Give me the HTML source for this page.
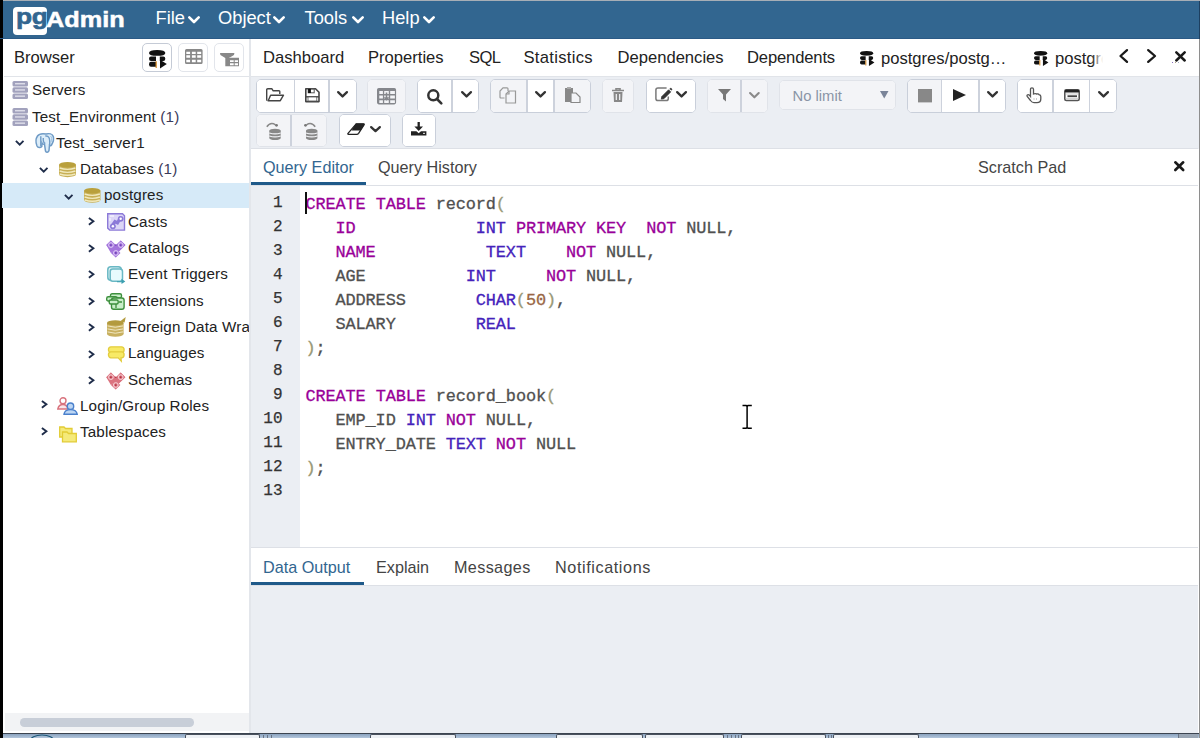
<!DOCTYPE html>
<html><head><meta charset="utf-8"><style>
*{box-sizing:border-box;margin:0;padding:0}
html,body{width:1200px;height:738px;overflow:hidden;background:#fff;font-family:"Liberation Sans",sans-serif;color:#222}
.a{position:absolute}
svg{position:absolute;overflow:visible}
.menu{color:#fff;font-size:18.3px;line-height:20px;white-space:nowrap}
.tab{font-size:16.6px;line-height:18px;color:#222;white-space:nowrap}
.tree{font-size:15.2px;line-height:16px;color:#222;white-space:nowrap;letter-spacing:0.15px}
.qtab{font-size:16.2px;line-height:18px;white-space:nowrap}
.btn{border:1px solid #c9cfda;border-radius:5px;background:#fff;overflow:hidden}
.dis{background:#f3f4f7;border-color:#e0e3e9}
.code{font-family:"Liberation Mono",monospace;font-size:16.9px;letter-spacing:-0.12px;-webkit-text-stroke:0.3px currentColor;white-space:pre;color:#505050;line-height:24px}
.ln{font-family:"Liberation Mono",monospace;font-size:16px;color:#333;-webkit-text-stroke:0.25px #333;text-align:right;width:32px;line-height:24px;white-space:pre}
.k{color:#990099}.t{color:#4422bb}.p{color:#999977}.n{color:#996644}
</style></head><body>
<div class="a" style="left:0px;top:0px;width:1200px;height:1.3px;background:#a7aeb6"></div>
<div class="a" style="left:0px;top:1px;width:1200px;height:38px;background:#326690"></div>
<div class="a" style="left:12.5px;top:6.5px;width:34.5px;height:28px;background:#fff;border-radius:4px"></div>
<div class="a " style="left:16px;top:3.8px;font:bold 22.5px/26px 'Liberation Sans';color:#326690;letter-spacing:-0.3px;-webkit-text-stroke:0.6px #326690;transform:scaleX(1.17);transform-origin:left">pg</div>
<div class="a " style="left:46px;top:7px;font:bold 22.6px/26px 'Liberation Sans';color:#fff;transform:scaleX(1.12);transform-origin:left;-webkit-text-stroke:0.5px #fff">Admin</div>
<div class="a menu" style="left:155.5px;top:7.5px;">File</div>
<svg style="left:188px;top:15.9px" width="12" height="7.3" viewBox="0 0 12 7.3"><polyline points="1.3,1.3 6.0,6.0 10.7,1.3" fill="none" stroke="#fff" stroke-width="2.6" stroke-linecap="round" stroke-linejoin="round"/></svg>
<div class="a menu" style="left:218px;top:7.5px;">Object</div>
<svg style="left:273.2px;top:15.9px" width="12" height="7.3" viewBox="0 0 12 7.3"><polyline points="1.3,1.3 6.0,6.0 10.7,1.3" fill="none" stroke="#fff" stroke-width="2.6" stroke-linecap="round" stroke-linejoin="round"/></svg>
<div class="a menu" style="left:304.5px;top:7.5px;">Tools</div>
<svg style="left:352.4px;top:15.9px" width="12" height="7.3" viewBox="0 0 12 7.3"><polyline points="1.3,1.3 6.0,6.0 10.7,1.3" fill="none" stroke="#fff" stroke-width="2.6" stroke-linecap="round" stroke-linejoin="round"/></svg>
<div class="a menu" style="left:382px;top:7.5px;">Help</div>
<svg style="left:423.2px;top:15.9px" width="12" height="7.3" viewBox="0 0 12 7.3"><polyline points="1.3,1.3 6.0,6.0 10.7,1.3" fill="none" stroke="#fff" stroke-width="2.6" stroke-linecap="round" stroke-linejoin="round"/></svg>
<div class="a" style="left:4px;top:75.5px;width:245px;height:1.5px;background:#e1e4e9"></div>
<div class="a tab" style="left:14px;top:49.3px;">Browser</div>
<div class="a btn" style="left:142px;top:43px;width:30px;height:29px;border:1.5px solid #c5cbd6"></div>
<div class="a btn" style="left:178px;top:43px;width:30px;height:29px;border-color:#e2e5eb"></div>
<div class="a btn" style="left:214px;top:43px;width:30px;height:29px;border-color:#e2e5eb"></div>
<div class="a" style="left:251px;top:75.5px;width:948px;height:1.5px;background:#e1e4e9"></div>
<div class="a tab" style="left:263px;top:49.2px;letter-spacing:0px">Dashboard</div>
<div class="a tab" style="left:368px;top:49.2px;letter-spacing:0px">Properties</div>
<div class="a tab" style="left:469px;top:49.2px;letter-spacing:-0.6px">SQL</div>
<div class="a tab" style="left:523.5px;top:49.2px;letter-spacing:0.3px">Statistics</div>
<div class="a tab" style="left:617.5px;top:49.2px;letter-spacing:0px">Dependencies</div>
<div class="a tab" style="left:747px;top:49.2px;letter-spacing:-0.15px">Dependents</div>
<div class="a tab" style="left:881px;top:49.5px;">postgres/postg…</div>
<div class="a tab" style="left:1055px;top:49.5px;width:49px;overflow:hidden">postgres</div>
<div class="a" style="left:1092px;top:44px;width:13px;height:28px;background:linear-gradient(to right,rgba(255,255,255,0),#fff 85%)"></div>
<div class="a" style="left:251px;top:77px;width:948px;height:72px;background:#ebeef3"></div>
<div class="a" style="left:250px;top:148px;width:948px;height:1px;background:#dde0e6"></div>
<div class="a qtab" style="left:263px;top:158px;color:#326690">Query Editor</div>
<div class="a" style="left:251px;top:182px;width:115px;height:2.5px;background:#1f5a8a"></div>
<div class="a qtab" style="left:378px;top:158px;color:#444">Query History</div>
<div class="a qtab" style="left:978px;top:158px;color:#444">Scratch Pad</div>
<div class="a" style="left:250px;top:185px;width:948px;height:1px;background:#dde0e6"></div>
<div class="a" style="left:250px;top:186px;width:50px;height:361px;background:#ebeef3"></div>
<div class="a" style="left:250px;top:547px;width:948px;height:1px;background:#dde0e6"></div>
<div class="a qtab" style="left:263px;top:558.3px;color:#326690">Data Output</div>
<div class="a" style="left:251px;top:582px;width:113px;height:2.5px;background:#1f5a8a"></div>
<div class="a qtab" style="left:376px;top:558.3px;color:#444">Explain</div>
<div class="a qtab" style="left:454px;top:558.3px;color:#444;letter-spacing:0.35px">Messages</div>
<div class="a qtab" style="left:555px;top:558.3px;color:#444;letter-spacing:0.6px">Notifications</div>
<div class="a" style="left:250px;top:585px;width:948px;height:1px;background:#dde0e6"></div>
<div class="a" style="left:250px;top:586px;width:948px;height:147px;background:#ebeef3"></div>
<div class="a" style="left:249px;top:39px;width:2px;height:694px;background:#e3e6eb"></div>
<div class="a" style="left:4.5px;top:713px;width:244.5px;height:17.5px;background:#f2f3f5"></div>
<div class="a" style="left:20px;top:718px;width:174px;height:8.6px;background:#c8ced8;border-radius:4.3px"></div>
<div class="a" style="left:0px;top:733px;width:1200px;height:1px;background:#3c4450"></div>
<div class="a" style="left:0px;top:734px;width:1200px;height:4px;background:linear-gradient(#8aa2be,#b3c6dc)"></div>
<div class="a" style="left:185px;top:734px;width:75px;height:4px;background:#eef1f5;border:1px solid #4a525e;border-bottom:none;border-radius:2px 2px 0 0"></div>
<div class="a" style="left:370px;top:734px;width:86px;height:4px;background:#eef1f5;border:1px solid #4a525e;border-bottom:none;border-radius:2px 2px 0 0"></div>
<div class="a" style="left:556px;top:734px;width:86.5px;height:4px;background:#eef1f5;border:1px solid #4a525e;border-bottom:none;border-radius:2px 2px 0 0"></div>
<div class="a" style="left:645px;top:734px;width:79px;height:4px;background:#eef1f5;border:1px solid #4a525e;border-bottom:none;border-radius:2px 2px 0 0"></div>
<div class="a" style="left:741px;top:734px;width:85px;height:4px;background:#eef1f5;border:1px solid #4a525e;border-bottom:none;border-radius:2px 2px 0 0"></div>
<div class="a" style="left:832.5px;top:734px;width:86.5px;height:4px;background:#eef1f5;border:1px solid #4a525e;border-bottom:none;border-radius:2px 2px 0 0"></div>
<div class="a" style="left:263px;top:734.5px;width:1px;height:3.5px;background:#6a7585"></div>
<div class="a" style="left:267px;top:734.5px;width:1px;height:3.5px;background:#6a7585"></div>
<div class="a" style="left:270.5px;top:734.5px;width:1px;height:3.5px;background:#6a7585"></div>
<div class="a" style="left:727px;top:734.5px;width:1px;height:3.5px;background:#6a7585"></div>
<div class="a" style="left:731px;top:734.5px;width:1px;height:3.5px;background:#6a7585"></div>
<div class="a" style="left:735px;top:734.5px;width:1px;height:3.5px;background:#6a7585"></div>
<div class="a" style="left:738px;top:734.5px;width:1px;height:3.5px;background:#6a7585"></div>
<div class="a" style="left:828px;top:734.5px;width:1px;height:3.5px;background:#6a7585"></div>
<div class="a" style="left:830.5px;top:734.5px;width:1px;height:3.5px;background:#6a7585"></div>
<div class="a" style="left:1178px;top:734px;width:20px;height:4px;background:#9aa6b4;border-left:1px solid #6a7585"></div>
<svg style="left:28px;top:733.5px" width="28" height="8" viewBox="0 0 28 8"><ellipse cx="14" cy="7" rx="12" ry="6" fill="none" stroke="#1e5a7a" stroke-width="1.2"/></svg>
<div class="a" style="left:0px;top:0px;width:2.5px;height:738px;background:#000"></div>
<div class="a" style="left:1198.6px;top:1px;width:1.4px;height:38px;background:#1d3f60"></div>
<div class="a" style="left:1198.6px;top:39px;width:1.4px;height:699px;background:#8e8e8e"></div>
<div class="a" style="left:0px;top:38px;width:1198.6px;height:1px;background:#2b5a86"></div>
<div class="a code" style="left:305.5px;top:192.5px"><span class="k">CREATE</span> <span class="k">TABLE</span> record<span class="p">(</span>
   <span class="k">ID</span>            <span class="t">INT</span> <span class="k">PRIMARY</span> <span class="k">KEY</span>  <span class="k">NOT</span> NULL,
   <span class="k">NAME</span>           <span class="t">TEXT</span>    <span class="k">NOT</span> NULL,
   AGE          <span class="t">INT</span>     <span class="k">NOT</span> NULL,
   ADDRESS       <span class="t">CHAR</span><span class="p">(</span><span class="n">50</span><span class="p">)</span>,
   SALARY        <span class="t">REAL</span>
<span class="p">)</span>;

<span class="k">CREATE</span> <span class="k">TABLE</span> record_book<span class="p">(</span>
   EMP_ID <span class="t">INT</span> <span class="k">NOT</span> NULL,
   ENTRY_DATE <span class="t">TEXT</span> <span class="k">NOT</span> NULL
<span class="p">)</span>;
</div>
<div class="a ln" style="left:250.5px;top:191.3px">1
2
3
4
5
6
7
8
9
10
11
12
13</div>
<div class="a" style="left:305px;top:192px;width:1.6px;height:22px;background:#111"></div>
<svg style="left:741.5px;top:404px" width="11" height="26" viewBox="0 0 11 26"><path d="M0.5 1.5 H4.2 L5.1 2.4 L6 1.5 H9.8 M5.1 2.4 V23.3 M0.5 24.2 H4.2 L5.1 23.3 L6 24.2 H9.8" fill="none" stroke="#000" stroke-width="1.5"/></svg>
<div class="a" style="left:2px;top:183px;width:247px;height:25px;background:#d6eaf8"></div>
<div class="a" style="left:2px;top:77px;width:247px;height:400px;overflow:hidden">
<svg style="left:10px;top:4.299999999999997px" width="16.5" height="18" viewBox="0 0 16.5 18"><g fill="#a2a2bd"><rect x="0.5" y="0" width="15.5" height="5.6" rx="1.5"/><rect x="0.5" y="6.2" width="15.5" height="5.6" rx="1.5"/><rect x="0.5" y="12.4" width="15.5" height="5.6" rx="1.5"/></g><g fill="#e4e4ee"><rect x="3" y="2.1" width="10" height="1.3"/><rect x="3" y="8.3" width="10" height="1.3"/><rect x="3" y="14.5" width="10" height="1.3"/></g></svg>
<div class="a tree" style="left:30px;top:5px">Servers</div>
<svg style="left:10px;top:31.400000000000006px" width="16.5" height="18" viewBox="0 0 16.5 18"><g fill="#a2a2bd"><rect x="0.5" y="0" width="15.5" height="5.6" rx="1.5"/><rect x="0.5" y="6.2" width="15.5" height="5.6" rx="1.5"/><rect x="0.5" y="12.4" width="15.5" height="5.6" rx="1.5"/></g><g fill="#e4e4ee"><rect x="3" y="2.1" width="10" height="1.3"/><rect x="3" y="8.3" width="10" height="1.3"/><rect x="3" y="14.5" width="10" height="1.3"/></g></svg>
<div class="a tree" style="left:30px;top:32px">Test_Environment <span style="color:#3a3a5a">(1)</span></div>
<svg style="left:13.4px;top:62.5px" width="9.4" height="6" viewBox="0 0 9.4 6"><polyline points="0.9,0.9 4.7,4.6 8.5,0.9" fill="none" stroke="#1f2d4a" stroke-width="1.9"/></svg>
<svg style="left:32.7px;top:56.400000000000006px" width="19" height="19.8" viewBox="0 0 19 19.8"><path d="M2.5 3 C4 0.8 8 0.5 11 1 C14 0.2 17.5 0.8 18.3 3.5 C19.2 6.5 18 9.5 16.5 12 C16 12.8 15.3 12.8 14.5 12.3 L14 17.5 C13.5 19.5 11 19.8 10.5 18 L9.5 11.2 C8.5 11.5 7.5 11 7 10 L6.8 13.5 C5.5 15 3 15 2 13 C0.8 10 0.8 5.5 2.5 3Z" fill="#dcedf9" stroke="#6f9bc6" stroke-width="1.5"/><path d="M5.8 3.2 V13.2 M8.3 5 C8 8 8.6 9.8 10.2 10.5 M10.3 3 C13.5 2.5 15.3 4.5 14.6 12" fill="none" stroke="#6f9bc6" stroke-width="1.4"/><path d="M15.5 3 C17 4 17 7 16 9" fill="none" stroke="#9dc0e0" stroke-width="1"/></svg>
<div class="a tree" style="left:54px;top:57.5px">Test_server1</div>
<svg style="left:37.3px;top:89.6px" width="9.4" height="6" viewBox="0 0 9.4 6"><polyline points="0.9,0.9 4.7,4.6 8.5,0.9" fill="none" stroke="#1f2d4a" stroke-width="1.9"/></svg>
<svg style="left:57.3px;top:85px" width="17" height="15.2" viewBox="0 0 17 15.2"><rect x="0" y="2.8" width="17" height="9.6" fill="#c7af55"/><ellipse cx="8.5" cy="12.399999999999999" rx="8.5" ry="2.8" fill="#c7af55"/><ellipse cx="8.5" cy="2.8" rx="8.5" ry="2.8" fill="#b9a03c"/>
<path d="M0.6 6 Q8.5 8.8 16.4 6 M0.6 9 Q8.5 11.8 16.4 9 M0.6 12 Q8.5 14.6 16.4 12" fill="none" stroke="#f1e9bd" stroke-width="1.4"/></svg>
<div class="a tree" style="left:78px;top:84px">Databases <span style="color:#3a3a5a">(1)</span></div>
<svg style="left:61.7px;top:116.80000000000001px" width="9.4" height="6" viewBox="0 0 9.4 6"><polyline points="0.9,0.9 4.7,4.6 8.5,0.9" fill="none" stroke="#1f2d4a" stroke-width="1.9"/></svg>
<svg style="left:81.7px;top:111px" width="16.5" height="14.8" viewBox="0 0 16.5 14.8"><rect x="0" y="2.8" width="16.5" height="9.200000000000001" fill="#c7af55"/><ellipse cx="8.25" cy="12.0" rx="8.25" ry="2.8" fill="#c7af55"/><ellipse cx="8.25" cy="2.8" rx="8.25" ry="2.8" fill="#b9a03c"/>
<path d="M0.6 6 Q8.25 8.8 15.9 6 M0.6 9 Q8.25 11.8 15.9 9 M0.6 12 Q8.25 14.6 15.9 12" fill="none" stroke="#f1e9bd" stroke-width="1.4"/></svg>
<div class="a tree" style="left:102px;top:110px">postgres</div>
<svg style="left:86.3px;top:140.2px" width="6.5" height="8.6" viewBox="0 0 6.5 8.6"><polyline points="0.9,0.9 5.4,4.3 0.9,7.7" fill="none" stroke="#1f2d4a" stroke-width="1.9"/></svg>
<svg style="left:86.3px;top:166.8px" width="6.5" height="8.6" viewBox="0 0 6.5 8.6"><polyline points="0.9,0.9 5.4,4.3 0.9,7.7" fill="none" stroke="#1f2d4a" stroke-width="1.9"/></svg>
<svg style="left:86.3px;top:193.39999999999998px" width="6.5" height="8.6" viewBox="0 0 6.5 8.6"><polyline points="0.9,0.9 5.4,4.3 0.9,7.7" fill="none" stroke="#1f2d4a" stroke-width="1.9"/></svg>
<svg style="left:86.3px;top:219.8px" width="6.5" height="8.6" viewBox="0 0 6.5 8.6"><polyline points="0.9,0.9 5.4,4.3 0.9,7.7" fill="none" stroke="#1f2d4a" stroke-width="1.9"/></svg>
<svg style="left:86.3px;top:246.2px" width="6.5" height="8.6" viewBox="0 0 6.5 8.6"><polyline points="0.9,0.9 5.4,4.3 0.9,7.7" fill="none" stroke="#1f2d4a" stroke-width="1.9"/></svg>
<svg style="left:86.3px;top:272.6px" width="6.5" height="8.6" viewBox="0 0 6.5 8.6"><polyline points="0.9,0.9 5.4,4.3 0.9,7.7" fill="none" stroke="#1f2d4a" stroke-width="1.9"/></svg>
<svg style="left:86.3px;top:299px" width="6.5" height="8.6" viewBox="0 0 6.5 8.6"><polyline points="0.9,0.9 5.4,4.3 0.9,7.7" fill="none" stroke="#1f2d4a" stroke-width="1.9"/></svg>
<svg style="left:104.9px;top:136.3px" width="18.2" height="17.8" viewBox="0 0 18.2 17.8"><path d="M0.7 0.7 H15.5 L17.5 2.7 V17.1 H2.7 L0.7 15.1Z" fill="#dcd6f7" stroke="#8c7ad8" stroke-width="1.4"/><path d="M4 14.5 L8 8.5 L10.5 9.8 L14 4" stroke="#8c7ad8" stroke-width="3.2" fill="none"/><circle cx="5.9" cy="13.3" r="2.9" fill="#8c7ad8"/><circle cx="5.9" cy="13.3" r="1.2" fill="#fff"/><circle cx="13.7" cy="5.8" r="2.9" fill="#8c7ad8"/><circle cx="13.7" cy="5.8" r="1.2" fill="#fff"/><path d="M3 3 H7 M3 5 V8" stroke="#f4f2fd" stroke-width="1.3"/></svg>
<div class="a tree" style="left:126px;top:136.5px">Casts</div>
<svg style="left:104px;top:162.9px" width="19.7" height="18" viewBox="0 0 20 18"><path d="M5 0.3 L9.7 5 L10 5.3 L10.3 5 L15 0.3 L19.7 5 L14.7 10 L10 14.7 L10 17.7 L5.2 13 L10 8.5 L5 13 L0.3 5Z" fill="#a374dc"/><path d="M5 0.3 L9.8 5 L5 9.7 L0.3 5Z M15 0.3 L19.7 5 L15 9.7 L10.2 5Z M10 8.3 L14.7 13 L10 17.7 L5.3 13Z M5 9.7 L10 5 L15 9.7 L10 13Z" fill="#a374dc"/><g fill="none" stroke="#e6d8f8" stroke-width="0.9"><circle cx="5" cy="5" r="2.4"/><circle cx="15" cy="5" r="2.4"/><circle cx="10" cy="13" r="2.4"/></g><g fill="#6a3ab0"><circle cx="5" cy="5" r="0.9"/><circle cx="15" cy="5" r="0.9"/><circle cx="10" cy="13" r="0.9"/><circle cx="10" cy="5" r="0.8"/></g></svg>
<div class="a tree" style="left:126px;top:163px">Catalogs</div>
<svg style="left:104.9px;top:188.60000000000002px" width="18.3" height="18" viewBox="0 0 18.3 18"><rect x="0.8" y="0.8" width="13.5" height="13.5" rx="3" fill="#dff3f6" stroke="#6ab8c4" stroke-width="1.5"/><rect x="3.2" y="3" width="12.3" height="12.3" rx="2.5" fill="#e8fbfd" stroke="#6ab8c4" stroke-width="1.5"/><path d="M10 15.3 H14.5 V12.8 L18.3 15.5 L14.5 18 V16.3 H10Z" fill="#3b9fb0"/></svg>
<div class="a tree" style="left:126px;top:189px">Event Triggers</div>
<svg style="left:104px;top:215.89999999999998px" width="18.8" height="17" viewBox="0 0 18.8 17"><g fill="#c9efc9" stroke="#3d8f3d" stroke-width="1.4"><rect x="4.5" y="0.7" width="11" height="4.2" rx="1.6"/><rect x="0.7" y="3.8" width="10.5" height="4.2" rx="1.6"/><rect x="5.5" y="5" width="12.6" height="11.3" rx="2.2"/><rect x="3.2" y="7" width="9" height="4" rx="1.5"/></g><path d="M10 11 V15 M13 9 H16" stroke="#3d8f3d" stroke-width="1.3"/></svg>
<div class="a tree" style="left:126px;top:215.5px">Extensions</div>
<svg style="left:105px;top:240px" width="18.7" height="19.7" viewBox="0 0 18.7 19.7"><g transform="translate(0,3.3)"><rect x="0" y="2.6" width="16.6" height="11.2" fill="#c8b060"/><ellipse cx="8.3" cy="13.8" rx="8.3" ry="2.6" fill="#c8b060"/><ellipse cx="8.3" cy="2.6" rx="8.3" ry="2.6" fill="#b39a3e"/><path d="M0.5 5.6 Q8.3 8.3 16.1 5.6 M0.5 8.6 Q8.3 11.3 16.1 8.6 M0.5 11.6 Q8.3 14.3 16.1 11.6" fill="none" stroke="#efe6c0" stroke-width="1"/></g><path d="M13 4.6 L18.7 0 L17.6 5.5Z" fill="#b39a3e"/></svg>
<div class="a tree" style="left:126px;top:242px">Foreign Data Wrappers</div>
<svg style="left:104.6px;top:268.7px" width="18.5" height="16" viewBox="0 0 18.5 16"><path d="M4 0.8 H14.5 C18 0.8 18 6.5 14.5 6.5 H4 C0.6 6.5 0.6 0.8 4 0.8Z" fill="#f8ea66" stroke="#e3cd3e" stroke-width="1.3"/><path d="M4 5.8 H14.5 C18 5.8 18 11.8 14.5 11.8 H14 L14.3 15.2 L11.2 11.8 H4 C0.6 11.8 0.6 5.8 4 5.8Z" fill="#f8ea66" stroke="#e3cd3e" stroke-width="1.3"/></svg>
<div class="a tree" style="left:126px;top:268px">Languages</div>
<svg style="left:104.1px;top:294.8px" width="19.6" height="18.2" viewBox="0 0 20 18"><path d="M5 0.3 L9.7 5 L10 5.3 L10.3 5 L15 0.3 L19.7 5 L14.7 10 L10 14.7 L10 17.7 L5.2 13 L10 8.5 L5 13 L0.3 5Z" fill="#db7480"/><path d="M5 0.3 L9.8 5 L5 9.7 L0.3 5Z M15 0.3 L19.7 5 L15 9.7 L10.2 5Z M10 8.3 L14.7 13 L10 17.7 L5.3 13Z M5 9.7 L10 5 L15 9.7 L10 13Z" fill="#db7480"/><g fill="none" stroke="#f8dfe2" stroke-width="0.9"><circle cx="5" cy="5" r="2.4"/><circle cx="15" cy="5" r="2.4"/><circle cx="10" cy="13" r="2.4"/></g><g fill="#b03040"><circle cx="5" cy="5" r="0.9"/><circle cx="15" cy="5" r="0.9"/><circle cx="10" cy="13" r="0.9"/><circle cx="10" cy="5" r="0.8"/></g></svg>
<div class="a tree" style="left:126px;top:294.5px">Schemas</div>
<svg style="left:38.6px;top:323.4px" width="6.5" height="8.6" viewBox="0 0 6.5 8.6"><polyline points="0.9,0.9 5.4,4.3 0.9,7.7" fill="none" stroke="#1f2d4a" stroke-width="1.9"/></svg>
<svg style="left:38.6px;top:350.4px" width="6.5" height="8.6" viewBox="0 0 6.5 8.6"><polyline points="0.9,0.9 5.4,4.3 0.9,7.7" fill="none" stroke="#1f2d4a" stroke-width="1.9"/></svg>
<svg style="left:55.4px;top:320px" width="21" height="18" viewBox="0 0 21 18"><g fill="none" stroke="#d9737e" stroke-width="1.4"><circle cx="6" cy="3.8" r="3"/><path d="M0.8 12 C1.5 8.5 3.5 7.5 6 7.5 C8.5 7.5 10 8.5 11 11.5 V12 H0.8Z" fill="#fbe5e8"/></g><g stroke="#4a80cc" stroke-width="1.4"><circle cx="13.5" cy="9.2" r="3.2" fill="#bcd6f4"/><path d="M7 17.2 C7.5 13.5 10 12.6 13.5 12.6 C17 12.6 19.6 13.5 20.2 17.2Z" fill="#bcd6f4"/></g></svg>
<div class="a tree" style="left:78px;top:321px">Login/Group Roles</div>
<svg style="left:56.9px;top:347.6px" width="18" height="17.5" viewBox="0 0 18 17.5"><g fill="#f5ea7a" stroke="#e2cc35" stroke-width="1.3"><path d="M0.7 2 H5 L6.5 3.5 H13 V12 H0.7Z"/><path d="M3.5 7 H8 L9.5 8.5 H17.3 V16.8 H3.5Z"/></g></svg>
<div class="a tree" style="left:78px;top:347px">Tablespaces</div>
</div>
<div class="a" style="left:256px;top:79px;width:100.5px;height:33.5px;border-radius:5px;overflow:hidden;border:1px solid #c9cfda;background:#fff">
<div class="a" style="left:-1px;top:-1px;width:38.5px;height:33.5px;background:#fff"></div>
<div class="a" style="left:37.5px;top:-1px;width:34.80000000000001px;height:33.5px;background:#fff"></div>
<div class="a" style="left:36.5px;top:-1px;width:1.8px;height:33.5px;background:#cdd2dc"></div>
<div class="a" style="left:72.30000000000001px;top:-1px;width:27.19999999999999px;height:33.5px;background:#fff"></div>
<div class="a" style="left:71.30000000000001px;top:-1px;width:1.8px;height:33.5px;background:#cdd2dc"></div>
</div>
<div class="a" style="left:366.5px;top:79px;width:39.0px;height:33.5px;border-radius:5px;overflow:hidden;border:1px solid #e0e3e9;background:#fff">
<div class="a" style="left:-1.0px;top:-1px;width:39.0px;height:33.5px;background:#f3f4f7"></div>
</div>
<div class="a" style="left:416.5px;top:79px;width:62.19999999999999px;height:33.5px;border-radius:5px;overflow:hidden;border:1px solid #c9cfda;background:#fff">
<div class="a" style="left:-1.0px;top:-1px;width:35.5px;height:33.5px;background:#fff"></div>
<div class="a" style="left:34.5px;top:-1px;width:26.69999999999999px;height:33.5px;background:#fff"></div>
<div class="a" style="left:33.5px;top:-1px;width:1.8px;height:33.5px;background:#cdd2dc"></div>
</div>
<div class="a" style="left:490px;top:79px;width:101px;height:33.5px;border-radius:5px;overflow:hidden;border:1px solid #c9cfda;background:#fff">
<div class="a" style="left:-1px;top:-1px;width:36.799999999999955px;height:33.5px;background:#f3f4f7"></div>
<div class="a" style="left:35.799999999999955px;top:-1px;width:27.5px;height:33.5px;background:#fff"></div>
<div class="a" style="left:34.799999999999955px;top:-1px;width:1.8px;height:33.5px;background:#cdd2dc"></div>
<div class="a" style="left:63.299999999999955px;top:-1px;width:36.700000000000045px;height:33.5px;background:#f3f4f7"></div>
<div class="a" style="left:62.299999999999955px;top:-1px;width:1.8px;height:33.5px;background:#cdd2dc"></div>
</div>
<div class="a" style="left:601.7px;top:79px;width:32.59999999999991px;height:33.5px;border-radius:5px;overflow:hidden;border:1px solid #e0e3e9;background:#fff">
<div class="a" style="left:-1.0px;top:-1px;width:32.59999999999991px;height:33.5px;background:#f3f4f7"></div>
</div>
<div class="a" style="left:645.5px;top:79px;width:50.5px;height:33.5px;border-radius:5px;overflow:hidden;border:1px solid #c9cfda;background:#fff">
<div class="a" style="left:-1.0px;top:-1px;width:50.5px;height:33.5px;background:#fff"></div>
</div>
<div class="a" style="left:706.5px;top:79px;width:61.0px;height:33.5px;border-radius:5px;overflow:hidden;border:1px solid #e0e3e9;background:#fff">
<div class="a" style="left:-1.0px;top:-1px;width:34.5px;height:33.5px;background:#f3f4f7"></div>
<div class="a" style="left:33.5px;top:-1px;width:26.5px;height:33.5px;background:#f3f4f7"></div>
<div class="a" style="left:32.5px;top:-1px;width:1.8px;height:33.5px;background:#cdd2dc"></div>
</div>
<div class="a" style="left:779px;top:80px;width:117px;height:30px;border-radius:5px;overflow:hidden;border:1px solid #e0e3e9;background:#fff">
<div class="a" style="left:-1px;top:-1px;width:117px;height:30px;background:#f3f4f7"></div>
</div>
<div class="a" style="left:907px;top:79px;width:98.70000000000005px;height:33.5px;border-radius:5px;overflow:hidden;border:1px solid #c9cfda;background:#fff">
<div class="a" style="left:-1px;top:-1px;width:34.60000000000002px;height:33.5px;background:#f3f4f7"></div>
<div class="a" style="left:33.60000000000002px;top:-1px;width:37.39999999999998px;height:33.5px;background:#fff"></div>
<div class="a" style="left:32.60000000000002px;top:-1px;width:1.8px;height:33.5px;background:#cdd2dc"></div>
<div class="a" style="left:71px;top:-1px;width:26.700000000000045px;height:33.5px;background:#fff"></div>
<div class="a" style="left:70px;top:-1px;width:1.8px;height:33.5px;background:#cdd2dc"></div>
</div>
<div class="a" style="left:1016.5px;top:79px;width:100.0px;height:33.5px;border-radius:5px;overflow:hidden;border:1px solid #c9cfda;background:#fff">
<div class="a" style="left:-1.0px;top:-1px;width:36.299999999999955px;height:33.5px;background:#fff"></div>
<div class="a" style="left:35.299999999999955px;top:-1px;width:36.90000000000009px;height:33.5px;background:#fff"></div>
<div class="a" style="left:34.299999999999955px;top:-1px;width:1.8px;height:33.5px;background:#cdd2dc"></div>
<div class="a" style="left:72.20000000000005px;top:-1px;width:26.799999999999955px;height:33.5px;background:#fff"></div>
<div class="a" style="left:71.20000000000005px;top:-1px;width:1.8px;height:33.5px;background:#cdd2dc"></div>
</div>
<div class="a" style="left:256px;top:114px;width:71px;height:32.5px;border-radius:5px;overflow:hidden;border:1px solid #e0e3e9;background:#fff">
<div class="a" style="left:-1px;top:-1px;width:34.89999999999998px;height:32.5px;background:#f3f4f7"></div>
<div class="a" style="left:33.89999999999998px;top:-1px;width:36.10000000000002px;height:32.5px;background:#f3f4f7"></div>
<div class="a" style="left:32.89999999999998px;top:-1px;width:1.8px;height:32.5px;background:#cdd2dc"></div>
</div>
<div class="a" style="left:339px;top:114px;width:51.5px;height:32.5px;border-radius:5px;overflow:hidden;border:1px solid #c9cfda;background:#fff">
<div class="a" style="left:-1px;top:-1px;width:51.5px;height:32.5px;background:#fff"></div>
</div>
<div class="a" style="left:401.6px;top:114px;width:34.69999999999999px;height:32.5px;border-radius:5px;overflow:hidden;border:1px solid #c9cfda;background:#fff">
<div class="a" style="left:-1.0px;top:-1px;width:34.69999999999999px;height:32.5px;background:#fff"></div>
</div>
<svg style="left:266px;top:87.5px" width="18.2" height="13.5" viewBox="0 0 18.2 13.5"><path d="M1.5 12.5 Q0.7 12.5 0.7 11.5 V1.8 Q0.7 0.7 1.8 0.7 H5.8 L7.2 2.8 H13 Q13.8 2.8 13.8 3.6 V6" fill="none" stroke="#444" stroke-width="1.4" stroke-linejoin="round"/><path d="M2.2 12.7 L4.6 7.2 H17.5 L14.3 12.7 Z" fill="none" stroke="#444" stroke-width="1.4" stroke-linejoin="round"/></svg>
<svg style="left:304.6px;top:87.9px" width="14.8" height="14.4" viewBox="0 0 14.8 14.4"><path d="M0.8 0.8 H10.5 L14 4.3 V13.6 H0.8Z" fill="none" stroke="#444" stroke-width="1.6" stroke-linejoin="round"/><rect x="3.2" y="0.8" width="6" height="4" fill="none" stroke="#555" stroke-width="1"/><rect x="3.1" y="0.8" width="2.8" height="4.2" fill="#111"/><path d="M0.8 8.8 H14" stroke="#444" stroke-width="1.4"/><rect x="3" y="9" width="8.8" height="4" fill="#fff" stroke="#555" stroke-width="0.8"/></svg>
<svg style="left:337px;top:91.3px" width="11.1" height="6.6" viewBox="0 0 11.1 6.6"><polyline points="1.15,1.15 5.55,5.449999999999999 9.95,1.15" fill="none" stroke="#333" stroke-width="2.3" stroke-linecap="round" stroke-linejoin="round"/></svg>
<svg style="left:376.5px;top:88px" width="19.1" height="16.4" viewBox="0 0 19.1 16.4"><path fill="#85878c" fill-rule="evenodd" d="M1.8 0 H17.3 Q19.1 0 19.1 1.8 V14.6 Q19.1 16.4 17.3 16.4 H1.8 Q0 16.4 0 14.6 V1.8 Q0 0 1.8 0Z M2.3 3.1 V6 H5.9 V3.1Z M7.2 3.1 V6 H11.8 V3.1Z M13.2 3.1 V6 H17.9 V3.1Z M2.3 7.6 V10.6 H5.9 V7.6Z M7.2 7.6 V10.6 H11.8 V7.6Z M13.2 7.6 V10.6 H17.9 V7.6Z M2.3 12.2 V15.1 H5.9 V12.2Z M7.2 12.2 V15.1 H11.8 V12.2Z M13.2 12.2 V15.1 H17.9 V12.2Z"/><path d="M9.5 4.5 V10.5" stroke="#85878c" stroke-width="1.6"/><path d="M6.8 9.3 L9.5 12.8 L12.2 9.3Z" fill="#85878c"/></svg>
<svg style="left:426.5px;top:88.5px" width="15.5" height="15" viewBox="0 0 15.5 15"><circle cx="6.3" cy="6.3" r="5" fill="none" stroke="#333" stroke-width="2.5"/><path d="M10 10 L14.3 14.3" stroke="#333" stroke-width="2.6" stroke-linecap="round"/></svg>
<svg style="left:460.5px;top:91.3px" width="11.1" height="6.6" viewBox="0 0 11.1 6.6"><polyline points="1.15,1.15 5.55,5.449999999999999 9.95,1.15" fill="none" stroke="#333" stroke-width="2.3" stroke-linecap="round" stroke-linejoin="round"/></svg>
<svg style="left:499px;top:87px" width="18" height="16.5" viewBox="0 0 18 16.5"><path d="M5.5 11 H2 Q1 11 1 10 L1 4 L4 0.8 H8 Q9 0.8 9 1.8 V4" fill="none" stroke="#999" stroke-width="1.2"/><path d="M7 16 V7 L10 4 H16.5 V16 Z" fill="#f3f4f7" stroke="#999" stroke-width="1.2"/><path d="M7 7 H10 V4" fill="none" stroke="#999" stroke-width="1.2"/></svg>
<svg style="left:535px;top:91.3px" width="11.1" height="6.6" viewBox="0 0 11.1 6.6"><polyline points="1.15,1.15 5.55,5.449999999999999 9.95,1.15" fill="none" stroke="#333" stroke-width="2.3" stroke-linecap="round" stroke-linejoin="round"/></svg>
<svg style="left:563.6px;top:87px" width="17" height="16" viewBox="0 0 17 16"><path d="M1 1 H9 V15 H1Z" fill="#888"/><path d="M3 0 H7 V2 H3Z" fill="#aaa"/><path d="M7 6 H12 L16 10 V15.5 H7Z" fill="#f3f4f7" stroke="#888" stroke-width="1.2"/></svg>
<svg style="left:611.7px;top:87.7px" width="12" height="14.5" viewBox="0 0 12 14.5"><path d="M0 2.5 H12 M4 2.5 V0.8 H8 V2.5" stroke="#888" stroke-width="1.6" fill="none"/><path d="M1.5 4 H10.5 L10 14 H2Z" fill="#888"/><path d="M4.3 6 V12 M7.7 6 V12" stroke="#f3f4f7" stroke-width="1.2"/></svg>
<svg style="left:654.6px;top:87px" width="17.5" height="14.3" viewBox="0 0 17.5 14.3"><path d="M11.6 1 H3 Q0.9 1 0.9 3.1 V11.4 Q0.9 13.5 3 13.5 H11.2 Q13.3 13.5 13.3 11.4 V9.5" fill="none" stroke="#7a7a7a" stroke-width="1.5"/><path d="M6.3 12.1 L6.8 9.6 L13.6 2.8 L15.7 4.9 L8.9 11.7 Z" fill="#333" stroke="#333" stroke-width="0.8" stroke-linejoin="round"/><path d="M14.3 2.1 L15.3 1.1 Q15.8 0.6 16.3 1.1 L17.1 1.9 Q17.6 2.4 17.1 2.9 L16.4 3.6Z" fill="#444"/></svg>
<svg style="left:675.6px;top:91.2px" width="11.1" height="6.6" viewBox="0 0 11.1 6.6"><polyline points="1.15,1.15 5.55,5.449999999999999 9.95,1.15" fill="none" stroke="#333" stroke-width="2.3" stroke-linecap="round" stroke-linejoin="round"/></svg>
<svg style="left:717.6px;top:88.9px" width="13" height="12.5" viewBox="0 0 13 12.5"><path d="M0 0 H13 L8 5.5 V12.5 L5 10 V5.5Z" fill="#777"/></svg>
<svg style="left:748.8px;top:91.5px" width="10.8" height="6.4" viewBox="0 0 10.8 6.4"><polyline points="1.05,1.05 5.4,5.3500000000000005 9.75,1.05" fill="none" stroke="#8a8a8a" stroke-width="2.1" stroke-linecap="round" stroke-linejoin="round"/></svg>
<div class="a " style="left:792.5px;top:89px;font-size:14.8px;line-height:14px;color:#8a94a6">No limit</div>
<svg style="left:879.6px;top:91px" width="8.5" height="7.6" viewBox="0 0 8.5 7.6"><path d="M0 0 H8.5 L4.25 7.6Z" fill="#7a8499"/></svg>
<svg style="left:917.6px;top:88.6px" width="14" height="13.4" viewBox="0 0 14 13.4"><rect width="14" height="13.4" fill="#888"/></svg>
<svg style="left:953px;top:89px" width="13" height="12" viewBox="0 0 13 12"><path d="M0 0 L13 6 L0 12Z" fill="#222"/></svg>
<svg style="left:986.8px;top:91.3px" width="11.1" height="6.6" viewBox="0 0 11.1 6.6"><polyline points="1.15,1.15 5.55,5.449999999999999 9.95,1.15" fill="none" stroke="#333" stroke-width="2.3" stroke-linecap="round" stroke-linejoin="round"/></svg>
<svg style="left:1025.8px;top:87px" width="15.5" height="16.5" viewBox="0 0 15.5 16.5"><path d="M4.5 9.5 V2.3 Q4.5 0.8 6 0.8 Q7.5 0.8 7.5 2.3 V7 Q9.5 6.2 10.5 7 Q12.5 6.5 13.3 7.8 Q14.8 7.8 14.8 9.5 V12 Q14.8 15.7 11 15.7 H8 Q6 15.7 4.5 13.5 L1.2 9.5 Q0.5 8 2 7.6 Q3 7.3 4.5 9.5Z" fill="#fff" stroke="#555" stroke-width="1.3"/><path d="M8 11 V13 M10.5 11 V13" stroke="#ccc" stroke-width="1"/></svg>
<svg style="left:1063.5px;top:88.5px" width="16" height="12.3" viewBox="0 0 16 12.3"><rect x="0.8" y="0.8" width="14.4" height="10.7" rx="1.6" fill="#fff" stroke="#555" stroke-width="1.6"/><rect x="0.8" y="0.8" width="14.4" height="2.8" rx="1" fill="#222"/><path d="M1.5 5 H14.5 M1.5 9.3 H14.5" stroke="#bbb" stroke-width="0.8"/><path d="M3.5 7.2 H13" stroke="#444" stroke-width="1.8"/></svg>
<svg style="left:1098.2px;top:91.2px" width="11.1" height="6.6" viewBox="0 0 11.1 6.6"><polyline points="1.15,1.15 5.55,5.449999999999999 9.95,1.15" fill="none" stroke="#333" stroke-width="2.3" stroke-linecap="round" stroke-linejoin="round"/></svg>
<svg style="left:266.3px;top:121.5px" width="15" height="17" viewBox="0 0 15 17"><g transform="translate(3.3,6.7)"><g fill="#888"><ellipse cx="5.7" cy="2" rx="5.7" ry="2"/><rect x="0" y="2" width="11.4" height="7.8"/><ellipse cx="5.7" cy="9.5" rx="5.3" ry="1.8"/></g><path d="M0 4.3 Q5.7 6.2 11.4 4.3 M0 7.3 Q5.7 9.2 11.4 7.3" stroke="#f3f4f7" stroke-width="1.2" fill="none"/></g><path d="M0.8 4.8 Q4.5 -0.5 9.5 2.8" fill="none" stroke="#888" stroke-width="1.5"/><circle cx="10.5" cy="3.3" r="1.4" fill="#777"/></svg>
<svg style="left:301.3px;top:121.5px" width="15" height="17" viewBox="0 0 15 17"><g transform="translate(5,6.7)"><g fill="#888"><ellipse cx="5.7" cy="2" rx="5.7" ry="2"/><rect x="0" y="2" width="11.4" height="7.8"/><ellipse cx="5.7" cy="9.5" rx="5.3" ry="1.8"/></g><path d="M0 4.3 Q5.7 6.2 11.4 4.3 M0 7.3 Q5.7 9.2 11.4 7.3" stroke="#f3f4f7" stroke-width="1.2" fill="none"/></g><path d="M14.2 4.8 Q10.5 -0.5 5.5 2.8" fill="none" stroke="#888" stroke-width="1.5"/><circle cx="4.5" cy="3.3" r="1.4" fill="#777"/></svg>
<svg style="left:347.3px;top:123.4px" width="18" height="12" viewBox="0 0 18 12"><path d="M9.2 0.8 H16.4 Q17.6 0.8 17 1.9 L11.6 10.3 Q10.9 11.3 9.7 11.3 H1.5 Q0.4 11.3 1 10.3 Z" fill="#fff" stroke="#222" stroke-width="1.3" stroke-linejoin="round"/><path d="M8.8 0.5 H16.6 Q18 0.5 17.3 1.8 L13.6 7.5 H4.5 Z" fill="#222"/></svg>
<svg style="left:370.3px;top:126.2px" width="11" height="6.3" viewBox="0 0 11 6.3"><polyline points="1.15,1.15 5.5,5.15 9.85,1.15" fill="none" stroke="#333" stroke-width="2.3" stroke-linecap="round" stroke-linejoin="round"/></svg>
<svg style="left:411.3px;top:121.6px" width="15.4" height="13.6" viewBox="0 0 15.4 13.6"><path d="M7.7 0 V6.5" stroke="#222" stroke-width="2.3"/><path d="M3.4 4.6 L7.7 8.9 L12 4.6Z" fill="#222"/><path d="M0 9.2 H5.4 L7.7 11.3 L10 9.2 H15.4 V13.6 H0Z" fill="#222"/><rect x="12" y="10.8" width="2" height="1.2" fill="#ccc"/></svg>
<svg style="left:148.9px;top:50.2px" width="18.0" height="18.4" viewBox="0 0 18 18.4"><g fill="#111"><path d="M0 2.9 Q0 0 8.15 0 Q16.3 0 16.3 2.9 Q16.3 5.8 8.15 5.8 Q0 5.8 0 2.9Z"/><path d="M0 8.8 Q0 6.6 2 6.6 H14.3 Q16.3 6.6 16.3 8.8 Q16.3 11 14.3 11 H2 Q0 11 0 8.8Z"/><path d="M0 14.3 Q0 11.8 2 11.8 H7 V16.8 H2 Q0 16.8 0 14.3Z"/></g><path d="M7 6 V18.2 H10.8 V6Z" fill="#fff"/><path d="M7.2 11.2 V18" stroke="#d89030" stroke-width="1.3"/><path d="M11 9.7 L17.8 14.1 L11 18.4Z" fill="#111"/></svg>
<svg style="left:184.8px;top:48.7px" width="17.6" height="15" viewBox="0 0 17.6 15"><path fill="#888" fill-rule="evenodd" d="M1.5 0 H16.1 Q17.6 0 17.6 1.5 V13.5 Q17.6 15 16.1 15 H1.5 Q0 15 0 13.5 V1.5 Q0 0 1.5 0Z M1.3 2.7 V5.1 H5.1 V2.7Z M6.9 2.7 V5.1 H10.7 V2.7Z M12.2 2.7 V5.1 H16.2 V2.7Z M1.3 6.2 V8.8 H5.1 V6.2Z M6.9 6.2 V8.8 H10.7 V6.2Z M12.2 6.2 V8.8 H16.2 V6.2Z M1.3 10.7 V13.3 H5.1 V10.7Z M6.9 10.7 V13.3 H10.7 V10.7Z M12.2 10.7 V13.3 H16.2 V10.7Z"/></svg>
<svg style="left:220px;top:53px" width="19" height="13.3" viewBox="0 0 19 13.3"><path d="M0 0 H14.4 L14 2 L9 5 V13.3 H5.3 V5 L0.4 2Z" fill="#888"/><rect x="9" y="4.8" width="10" height="8.5" fill="#fff"/><path fill="#888" fill-rule="evenodd" d="M9 4.8 H19 V13.3 H9Z M10 7.3 V9 H13.7 V7.3Z M14.7 7.3 V9 H18 V7.3Z M10 10.2 V12.2 H13.7 V10.2Z M14.7 10.2 V12.2 H18 V10.2Z"/></svg>
<svg style="left:860.2px;top:51px" width="14.580000000000002" height="14.904" viewBox="0 0 18 18.4"><g fill="#111"><path d="M0 2.9 Q0 0 8.15 0 Q16.3 0 16.3 2.9 Q16.3 5.8 8.15 5.8 Q0 5.8 0 2.9Z"/><path d="M0 8.8 Q0 6.6 2 6.6 H14.3 Q16.3 6.6 16.3 8.8 Q16.3 11 14.3 11 H2 Q0 11 0 8.8Z"/><path d="M0 14.3 Q0 11.8 2 11.8 H7 V16.8 H2 Q0 16.8 0 14.3Z"/></g><path d="M7 6 V18.2 H10.8 V6Z" fill="#fff"/><path d="M7.2 11.2 V18" stroke="#d89030" stroke-width="1.3"/><path d="M11 9.7 L17.8 14.1 L11 18.4Z" fill="#111"/></svg>
<svg style="left:1033.7px;top:51px" width="14.580000000000002" height="14.904" viewBox="0 0 18 18.4"><g fill="#111"><path d="M0 2.9 Q0 0 8.15 0 Q16.3 0 16.3 2.9 Q16.3 5.8 8.15 5.8 Q0 5.8 0 2.9Z"/><path d="M0 8.8 Q0 6.6 2 6.6 H14.3 Q16.3 6.6 16.3 8.8 Q16.3 11 14.3 11 H2 Q0 11 0 8.8Z"/><path d="M0 14.3 Q0 11.8 2 11.8 H7 V16.8 H2 Q0 16.8 0 14.3Z"/></g><path d="M7 6 V18.2 H10.8 V6Z" fill="#fff"/><path d="M7.2 11.2 V18" stroke="#d89030" stroke-width="1.3"/><path d="M11 9.7 L17.8 14.1 L11 18.4Z" fill="#111"/></svg>
<svg style="left:1119px;top:48.7px" width="9" height="14" viewBox="0 0 9 14"><polyline points="8,1.1 1.5,7 8,12.9" fill="none" stroke="#1a1a1a" stroke-width="2.3" stroke-linecap="round" stroke-linejoin="round"/></svg>
<svg style="left:1146.5px;top:48.7px" width="9.5" height="14" viewBox="0 0 9.5 14"><polyline points="1.2,1.1 8,7 1.2,12.9" fill="none" stroke="#1a1a1a" stroke-width="2.3" stroke-linecap="round" stroke-linejoin="round"/></svg>
<svg style="left:1175px;top:51.2px" width="11" height="10.8" viewBox="0 0 11 10.8"><path d="M1.3 1.3 L9.7 9.5 M9.7 1.3 L1.3 9.5" stroke="#1a1a1a" stroke-width="2.5" stroke-linecap="round"/></svg>
<div class="a" style="left:1171.5px;top:62px;width:1.3px;height:1.3px;background:#8a70c0"></div>
<div class="a" style="left:1174.5px;top:62px;width:1.3px;height:1.3px;background:#b0a080"></div>
<div class="a" style="left:1177.5px;top:62px;width:1.3px;height:1.3px;background:#a0b0c0"></div>
<svg style="left:1173.8px;top:160.7px" width="10.5" height="10.3" viewBox="0 0 10.5 10.3"><path d="M1.3 1.3 L9.2 9 M9.2 1.3 L1.3 9" stroke="#1a1a1a" stroke-width="2.6" stroke-linecap="round"/></svg>
</body></html>
